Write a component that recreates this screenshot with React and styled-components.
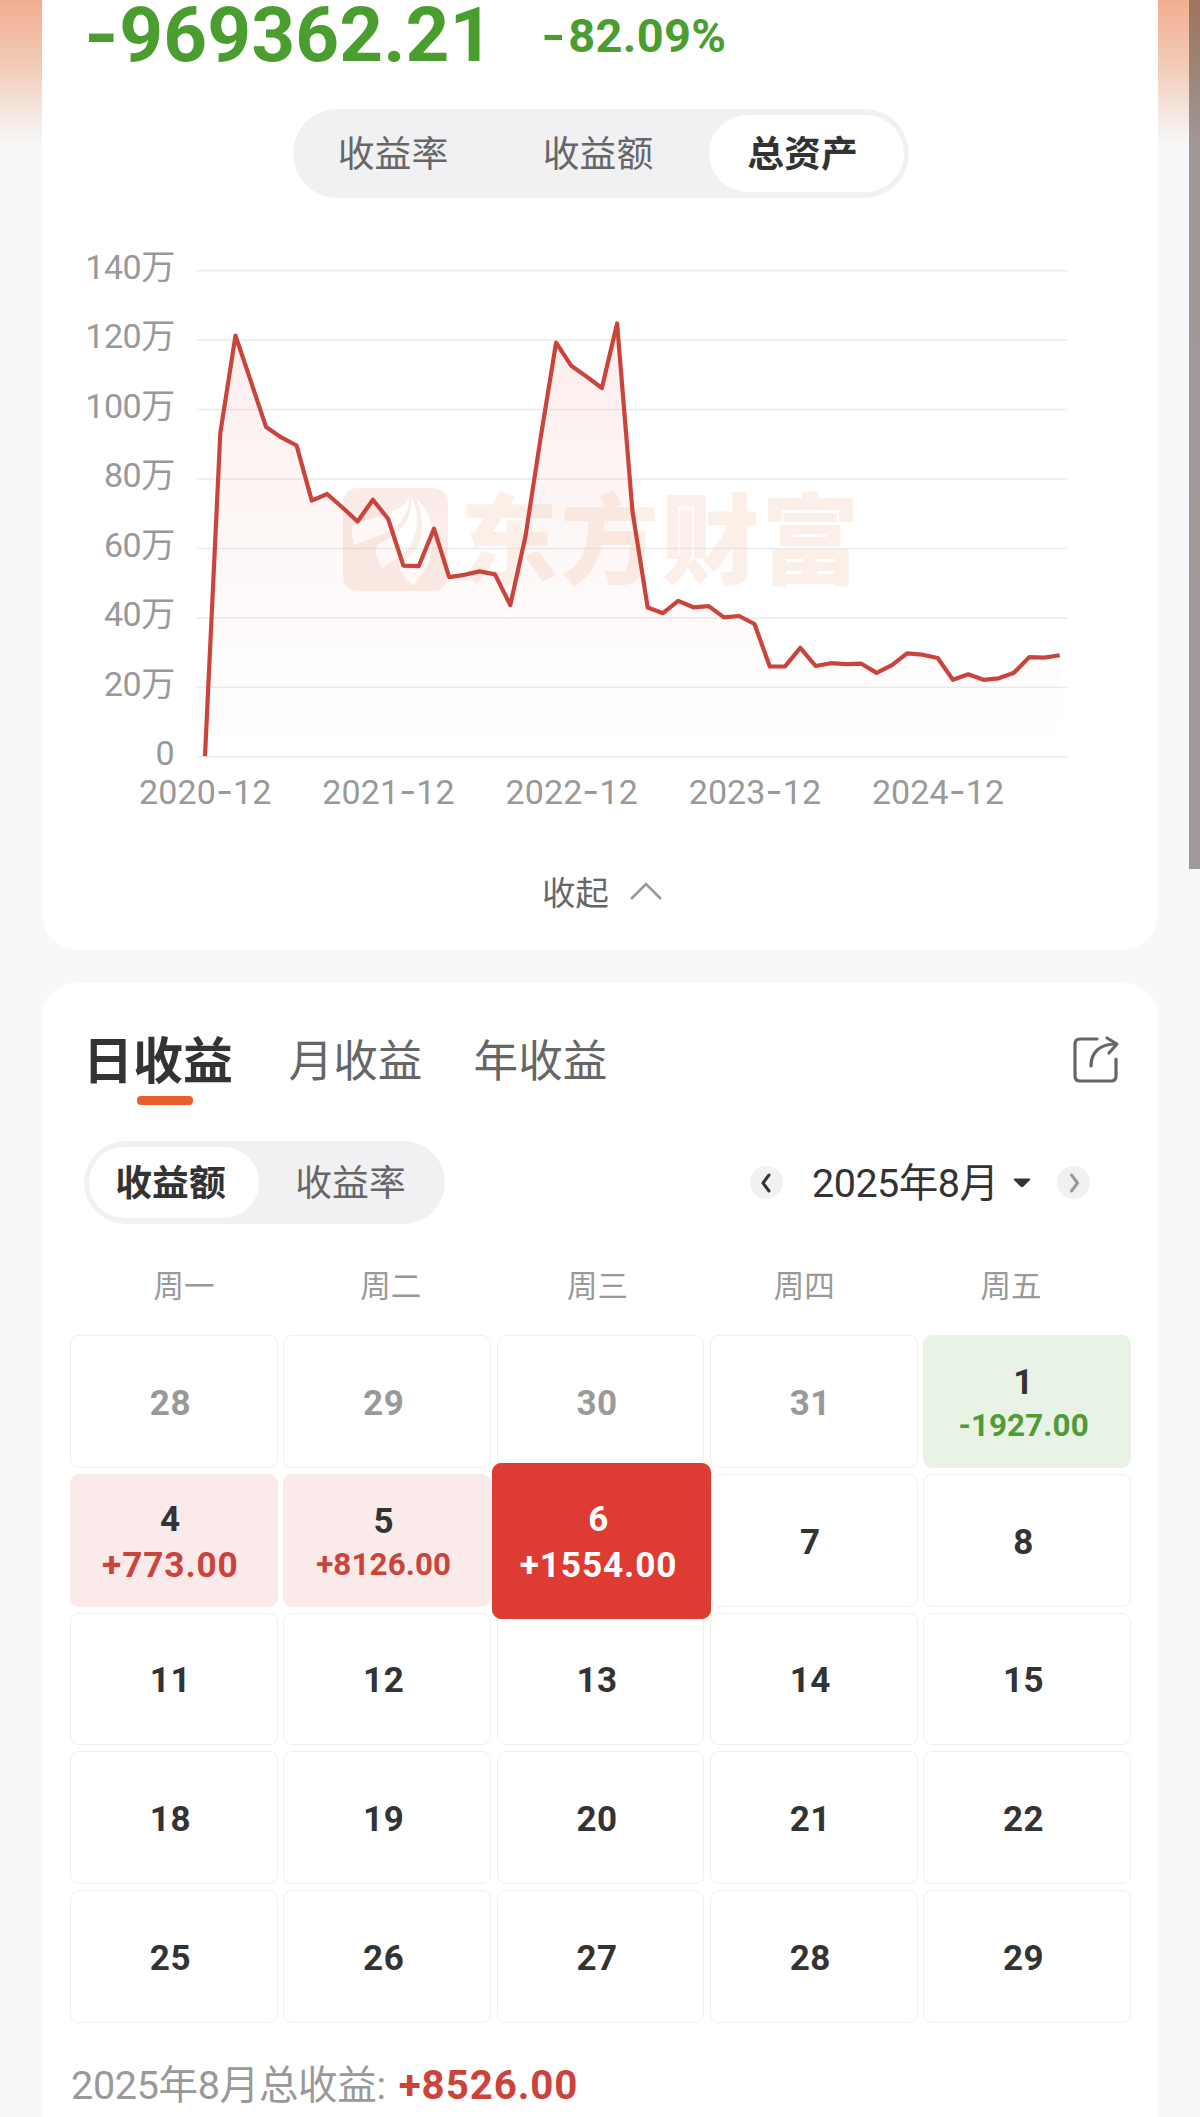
import React from 'react';
import styled, { createGlobalStyle, css } from 'styled-components';

const GlobalStyle = createGlobalStyle`
  *, *::before, *::after { box-sizing: border-box; }
  body {
    margin: 0;
    background: #f7f8fa;
    font-family: Roboto, "Noto Sans CJK SC", sans-serif;
    color: #333;
  }
  button {
    border: 0;
    padding: 0;
    background: none;
    font: inherit;
    color: inherit;
  }
`;

const Page = styled.main`
  position: relative;
  width: 1200px;
  height: 2117px;
  overflow: hidden;
  padding: 0 42px;
  display: flex;
  flex-direction: column;
  gap: 34px;
  background: linear-gradient(180deg, #f1ae8f 0, #f2cdb9 70px, #f4e3da 105px, #f7f8fa 146px) #f7f8fa;
`;

const EdgeShade = styled.div`
  position: absolute;
  top: 0;
  right: 0;
  width: 11px;
  height: 869px;
  background: linear-gradient(180deg, #9e745f 0, #9c8577 70px, #a09897 148px, #a19a9a 100%);
`;

const AssetCard = styled.section`
  height: 949px;
  flex: none;
  display: flex;
  flex-direction: column;
  align-items: center;
  background: #fff;
  border-radius: 0 0 34px 34px;
`;

const Summary = styled.div`
  align-self: stretch;
  height: 109px;
  padding-left: 42px;
  display: flex;
  align-items: flex-start;
  gap: 48px;
  color: #4a9d2f;
  font-weight: 700;
  white-space: nowrap;
`;

const TotalLoss = styled.span`
  font-size: 76.5px;
  line-height: 70px;
  letter-spacing: 0.1px;
`;

const LossRate = styled.span`
  font-size: 47px;
  line-height: 71px;
  letter-spacing: 0.3px;
`;

const Minus = styled.span`
  display: inline-block;
  margin-right: ${(p) => p.$gap || 0}px;
  transform: scaleX(${(p) => p.$stretch || 1});
  transform-origin: left;
`;

const Segments = styled.div`
  display: flex;
  flex: none;
  width: ${(p) => p.$width}px;
  height: ${(p) => p.$height}px;
  margin-left: ${(p) => p.$inset || 0}px;
  padding: 6px 5px;
  border-radius: 45px;
  background: #f1f1f4;
`;

const Segment = styled.button`
  flex: none;
  width: ${(p) => p.$width}px;
  padding: 3px ${(p) => p.$right || 0}px 0 ${(p) => p.$left || 0}px;
  border-radius: 40px;
  font-size: 36.8px;
  line-height: 1;
  color: #666;
  ${(p) =>
    p.$active &&
    css`
      background: #fff;
      color: #333;
      font-weight: 700;
    `}
`;

const ChartBox = styled.div`
  width: 1116px;
  height: 642px;
`;

const Collapse = styled.button`
  display: flex;
  align-items: center;
  gap: 21px;
  margin: 12px 0 0 4px;
  height: 84px;
  font-size: 33.4px;
  line-height: 1;
  color: #666;

  svg { margin-top: -7px; }
`;

const CalendarCard = styled.section`
  flex: 1;
  display: flex;
  flex-direction: column;
  padding: 43px 27px 0 28px;
  background: #fff;
  border-radius: 34px 34px 0 0;
`;

const TabBar = styled.nav`
  display: flex;
  height: 115px;
  padding: 0 11px 0 13px;
`;

const Tab = styled.button`
  display: flex;
  flex-direction: column;
  align-items: center;
  height: 78px;
  width: ${(p) => p.$width}px;
  margin-right: ${(p) => p.$after || 0}px;
  padding-top: 3px;
  font-size: 44.6px;
  line-height: 66px;
  color: #666;
  white-space: nowrap;
  ${(p) =>
    p.$active &&
    css`
      font-size: 50px;
      font-weight: 700;
      color: #333;
      &::after {
        content: '';
        flex: none;
        width: 56px;
        height: 8.5px;
        margin: 1px 0 0 14px;
        border-radius: 4px;
        background: #e8612d;
      }
    `}
`;

const ShareButton = styled.button`
  margin: 9px 0 0 auto;
  width: 48px;
  height: 50px;
`;

const Controls = styled.div`
  display: flex;
  align-items: center;
  height: 83px;
  padding: 0 41px 0 14px;
`;

const MonthPicker = styled.div`
  display: flex;
  align-items: center;
  margin-left: auto;
`;

const Round = styled.button`
  display: grid;
  place-items: center;
  width: 33px;
  height: 33px;
  border-radius: 50%;
  background: #f1f1f4;
  color: ${(p) => (p.$dim ? '#999' : '#333')};
`;

const Month = styled.span`
  width: 184px;
  margin: 0 17px 0 29px;
  padding-top: 3px;
  font-size: 39.5px;
  line-height: 60px;
  letter-spacing: -0.5px;
  white-space: nowrap;
`;

const Caret = styled.svg`
  margin-right: 26px;
`;

const Weekdays = styled.div`
  display: grid;
  grid-template-columns: repeat(5, 206.8px);
  height: 111px;
  padding: 43px 0 0 10.5px;
  font-size: 30.5px;
  line-height: 40px;
  text-align: center;
  color: #999;
`;

const Grid = styled.div`
  display: grid;
  grid-template-columns: repeat(5, 207.8px);
  grid-auto-rows: 132.8px;
  gap: 6px 5.5px;
`;

const tones = {
  plain: { bg: '#fff', edge: '#efefef', day: '#333', value: '#333' },
  muted: { bg: '#fff', edge: '#efefef', day: '#999', value: '#999' },
  gain: { bg: '#faeaea', edge: '#faeaea', day: '#333', value: '#cb433b' },
  loss: { bg: '#e8f3e5', edge: '#e8f3e5', day: '#333', value: '#4f9c37' },
  selected: { bg: '#de3b33', edge: '#de3b33', day: '#fff', value: '#fff' },
};

const Cell = styled.button`
  display: flex;
  flex-direction: column;
  align-items: center;
  justify-content: center;
  padding: 5px 7px 0 0;
  border: 1.5px solid ${(p) => tones[p.$tone].edge};
  border-radius: 9px;
  background: ${(p) => tones[p.$tone].bg};
  color: ${(p) => tones[p.$tone].day};
  font-weight: 700;
  font-size: 35px;
  line-height: 44px;
  letter-spacing: 0.5px;
  ${(p) =>
    p.$tone === 'selected' &&
    css`
      z-index: 1;
      padding: 4px 6px 0 0;
      margin: -11px -7px -12px -5px;
    `}
`;

const Profit = styled.span`
  color: ${(p) => tones[p.$tone].value};
  font-size: ${(p) => (p.$small ? 31.4 : 35.2)}px;
  line-height: ${(p) => (p.$small ? 42 : 46)}px;
  letter-spacing: ${(p) => (p.$small ? 0.1 : 0.9)}px;
`;

const Footer = styled.p`
  display: flex;
  align-items: baseline;
  margin: 33px 0 0;
  padding-left: 1px;
  font-size: 39.5px;
  line-height: 60px;
  letter-spacing: -0.3px;
  color: #999;
  white-space: nowrap;
`;

const FooterValue = styled.strong`
  margin-left: 13px;
  font-size: 40.3px;
  letter-spacing: 0.9px;
  color: #cb433b;
`;

const AxisText = styled.text`
  font-family: Roboto, 'Noto Sans CJK SC', sans-serif;
  font-size: 34px;
  letter-spacing: ${(p) => p.$spacing}px;
  fill: #999;
`;

const Brand = styled.text`
  font-family: 'Noto Sans CJK SC', sans-serif;
  font-weight: 900;
  font-size: 98px;
  letter-spacing: 2.5px;
  fill: #f5d8c9;
  fill-opacity: 0.42;
`;

const points = [
  756.2, 433, 335.5, 381.2, 427.1, 437.4, 445.5, 500.6, 494, 507.5, 521.5, 499.7, 519, 565.6, 566.2,
  528.6, 577.1, 574.8, 571.4, 574.4, 605, 536.2, 436.7, 342.6, 365.8, 376.6, 388, 323.5, 510.8, 607.5,
  613.2, 600.9, 607.3, 606.1, 617.4, 616, 624, 666.5, 666.3, 647.8, 666, 663.2, 664.2, 663.7, 672.9,
  665.1, 653.3, 654.7, 658, 679.8, 674.3, 679.8, 678.3, 672.7, 657.1, 657.6, 655.2,
].map((y, i) => [205 + i * 15.264, y]);

const linePath = 'M' + points.map(([x, y]) => `${x.toFixed(1)} ${y}`).join('L');
const yLabels = ['140万', '120万', '100万', '80万', '60万', '40万', '20万', '0'];
const xLabels = ['2020', '2021', '2022', '2023', '2024'];

function AssetChart() {
  return (
    <svg width="1116" height="642" viewBox="42 198 1116 642">
      <defs>
        <linearGradient id="area" gradientUnits="userSpaceOnUse" x1="0" y1="323" x2="0" y2="757">
          <stop offset="0" stopColor="#e04038" stopOpacity="0.09" />
          <stop offset="0.55" stopColor="#e04038" stopOpacity="0.035" />
          <stop offset="1" stopColor="#e04038" stopOpacity="0" />
        </linearGradient>
        <linearGradient id="mark" x1="0" y1="0" x2="0" y2="1">
          <stop offset="0" stopColor="#f0c4bd" stopOpacity="0.34" />
          <stop offset="1" stopColor="#f3ccb8" stopOpacity="0.34" />
        </linearGradient>
      </defs>
      {yLabels.map((label, i) => (
        <g key={label}>
          <rect x="197" y={270 + i * 69.43} width="870" height="1.5" fill="#e9ebed" />
          <AxisText $spacing={-0.5} x={i === 7 ? 174 : 174.7} y={279 + i * 69.43} textAnchor="end">{label}</AxisText>
        </g>
      ))}
      {xLabels.map((year, i) => (
        <AxisText $spacing={0.1} key={year} x={205.3 + i * 183.2} y="804" textAnchor="middle">
          {year}<tspan fontFamily="Inter" fontSize="37">-</tspan>12
        </AxisText>
      ))}
      <path
        fillRule="evenodd"
        fill="url(#mark)"
        d="M359 488H432Q448 488 448 504V574Q448 591 432 591H359Q343 591 343 574V504Q343 488 359 488Z
           M409 495C405 514 379 513 353 526C350 534 353 539 354 545C374 536 393 535 403 518C408 510 410 503 409 495Z
           M411 496C413 523 399 533 380 543C372 548 376 557 383 569C389 560 399 561 407 550C419 536 420 511 411 496Z
           M416 499C430 509 435 530 431 550C431 569 418 575 414 586C407 580 399 573 399 564C411 557 418 550 421 537C424 523 421 509 416 499Z"
      />
      <Brand x="460" y="576">东方财富</Brand>
      <path d={`${linePath}L1059.8 756.5L205 756.5Z`} fill="url(#area)" />
      <path d={linePath} fill="none" stroke="#ca443b" strokeWidth="4.2" strokeLinejoin="round" />
    </svg>
  );
}

const Chevron = ({ d }) => (
  <svg width="14" height="20" viewBox="0 0 14 20" fill="none" stroke="currentColor" strokeWidth="3" strokeLinecap="round" strokeLinejoin="round">
    <path d={d} />
  </svg>
);

const days = [
  { d: 28, tone: 'muted' },
  { d: 29, tone: 'muted' },
  { d: 30, tone: 'muted' },
  { d: 31, tone: 'muted' },
  { d: 1, tone: 'loss', v: '-1927.00', small: true },
  { d: 4, tone: 'gain', v: '+773.00' },
  { d: 5, tone: 'gain', v: '+8126.00', small: true },
  { d: 6, tone: 'selected', v: '+1554.00' },
  ...[7, 8, 11, 12, 13, 14, 15, 18, 19, 20, 21, 22, 25, 26, 27, 28, 29].map((d) => ({ d, tone: 'plain' })),
];

export default function App() {
  return (
    <>
      <GlobalStyle />
      <Page>
        <AssetCard>
          <Summary>
            <TotalLoss><Minus $gap={5} $stretch={1.16}>-</Minus>969362.21</TotalLoss>
            <LossRate><Minus $gap={8} $stretch={1.35}>-</Minus>82.09%</LossRate>
          </Summary>
          <Segments $width={616} $height={89} $inset={2}>
            <Segment $width={206} $right={16}>收益率</Segment>
            <Segment $width={205} $right={17}>收益额</Segment>
            <Segment $width={195} $right={8} $active>总资产</Segment>
          </Segments>
          <ChartBox><AssetChart /></ChartBox>
          <Collapse>
            收起
            <svg width="32" height="20" viewBox="0 0 32 20" fill="none" stroke="#999" strokeWidth="2.6">
              <path d="M1 18L16 3L31 18" />
            </svg>
          </Collapse>
        </AssetCard>

        <CalendarCard>
          <TabBar>
            <Tab $active $width={150} $after={56}>日收益</Tab>
            <Tab $width={133} $after={52}>月收益</Tab>
            <Tab $width={133}>年收益</Tab>
            <ShareButton aria-label="分享">
              <svg width="48" height="50" viewBox="0 0 48 50" fill="none" stroke="#666" strokeWidth="3.2" strokeLinecap="round" strokeLinejoin="round">
                <path d="M25 4H8Q3 4 3 9V41Q3 46 8 46H39Q44 46 44 41V24" />
                <path d="M19 31C19 17 28 9 44 9M35 3L45 9L37 18" />
              </svg>
            </ShareButton>
          </TabBar>

          <Controls>
            <Segments $width={361} $height={83}>
              <Segment $width={170} $right={7} $active>收益额</Segment>
              <Segment $width={181} $left={2}>收益率</Segment>
            </Segments>
            <MonthPicker>
              <Round aria-label="上月"><Chevron d="M9 2L3 10L9 18" /></Round>
              <Month>2025年8月</Month>
              <Caret width="18" height="10" viewBox="0 0 18 10">
                <path d="M1.6 0.5H16.4Q18 0.8 17 2L10.5 8.4Q9 9.6 7.5 8.4L1 2Q0 0.8 1.6 0.5Z" fill="#333" />
              </Caret>
              <Round $dim aria-label="下月"><Chevron d="M4.500 2L10.500 10L4.500 18" /></Round>
            </MonthPicker>
          </Controls>

          <Weekdays>
            {['周一', '周二', '周三', '周四', '周五'].map((w) => <span key={w}>{w}</span>)}
          </Weekdays>

          <Grid>
            {days.map(({ d, tone, v, small }, i) => (
              <Cell key={i} $tone={tone}>
                {d}
                {v && <Profit $tone={tone} $small={small}>{v}</Profit>}
              </Cell>
            ))}
          </Grid>

          <Footer>
            2025年8月总收益:
            <FooterValue>+8526.00</FooterValue>
          </Footer>
        </CalendarCard>
        <EdgeShade />
      </Page>
    </>
  );
}
